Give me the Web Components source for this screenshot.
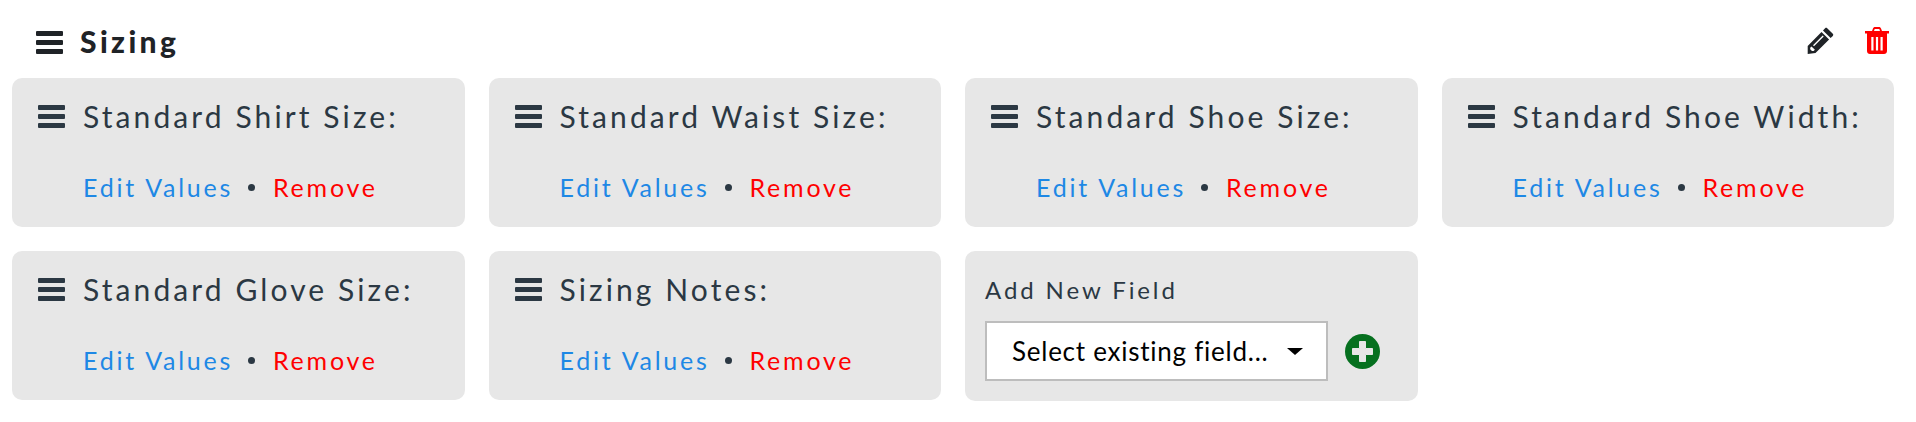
<!DOCTYPE html>
<html>
<head>
<meta charset="utf-8">
<title>Sizing</title>
<style>
  html, body { margin: 0; background: #fff; }
  body { font-family: "Lato", "Liberation Sans", sans-serif; font-variant-ligatures: none; }
</style>
</head>
<body>
<template id="bars-tpl">
  <style>
    :host { display: inline-flex; flex: none; }
    svg { display: block; width: 27px; height: 23px; fill: currentColor; }
  </style>
  <svg viewBox="0 0 27 23"><rect y="0" width="27" height="5" rx="1"/><rect y="9" width="27" height="5" rx="1"/><rect y="18" width="27" height="5" rx="1"/></svg>
</template>

<script>
  class SizingBars extends HTMLElement {
    constructor() {
      super();
      this.attachShadow({ mode: "open" });
      this.shadowRoot.appendChild(document.getElementById("bars-tpl").content.cloneNode(true));
    }
  }
  customElements.define("sizing-bars", SizingBars);

  class SizingHeader extends HTMLElement {
    constructor() {
      super();
      this.attachShadow({ mode: "open" });
      this.shadowRoot.innerHTML = `
        <style>
          :host { display: flex; align-items: center; height: 78px; box-sizing: border-box; padding: 6px 21px 0 36px; color: #1f2327; }
          h2 { margin: 0 0 2px 17px; font-size: 30px; line-height: 36px; font-weight: 900; letter-spacing: 3.4px; flex: 1; }
          .tools { display: flex; align-items: center; gap: 31px; padding: 0 6px 4px 0; }
          svg { display: block; }
        </style>
        <sizing-bars></sizing-bars>
        <h2><slot></slot></h2>
        <div class="tools">
          <svg width="27" height="27" viewBox="0 0 27 27" fill="#1f2327"><path d="M20.2 1.2 25.8 6.8C26.4 7.4 26.4 8.3 25.8 8.9L23.6 11 16 3.4 18.100 1.200C18.700 .6 19.600 .6 20.200 1.200ZM14.500 4.900 22.100 12.500 8.500 26 .7 27V19ZM4.500 19.500 3.200 20.800V22.300L5 24.100H6.600L7.900 22.800ZM15.700 8.500 6 18.200 7 19.200 16.700 9.500Z"/></svg>
          <svg width="24" height="27" viewBox="0 0 24 27" fill="#ff0000"><path fill-rule="evenodd" d="M7 4 8 1.500C8.400.5 9.100 0 10 0H14C14.900 0 15.600.5 16 1.500L17 4H24V6.500H22V24C22 25.700 20.700 27 19 27H5C3.300 27 2 25.700 2 24V6.500H0V4ZM9 4H15L14.300 2H9.700ZM6.300 10V23.500H8.500V10ZM10.900 10V23.500H13.100V10ZM15.500 10V23.500H17.700V10Z"/></svg>
        </div>
      `;
    }
  }
  customElements.define("sizing-header", SizingHeader);

  class FieldCard extends HTMLElement {
    constructor() {
      super();
      this.attachShadow({ mode: "open" });
      this.shadowRoot.innerHTML = `
        <style>
          :host { display: flex; flex-direction: column; box-sizing: border-box; height: 149px; padding: 22px 20px 0 26px; background: #e7e7e7; border-radius: 10px; color: #2b3843; }
          .title { display: flex; align-items: center; height: 32px; gap: 18px; font-size: 30px; letter-spacing: 3.1px; white-space: nowrap; }
          sizing-bars { color: #2b3843; }
          .links { display: flex; align-items: center; margin: 40px 0 0 45px; height: 30px; font-size: 25px; letter-spacing: 2.75px; white-space: nowrap; }
          a { color: #1e88e5; text-decoration: none; }
          a.rm { color: #ff0000; }
          .dot { width: 7px; height: 7px; border-radius: 50%; background: #2b3843; margin: 0 18px 0 15px; }
        </style>
        <div class="title"><sizing-bars></sizing-bars><span><slot></slot></span></div>
        <div class="links"><a href="#">Edit Values</a><span class="dot"></span><a class="rm" href="#">Remove</a></div>
      `;
    }
  }
  customElements.define("field-card", FieldCard);

  class AddFieldCard extends HTMLElement {
    constructor() {
      super();
      this.attachShadow({ mode: "open" });
      this.shadowRoot.innerHTML = `
        <style>
          :host { display: block; box-sizing: border-box; height: 150px; padding: 24px 20px 0 20px; background: #e7e7e7; border-radius: 10px; color: #2b3843; }
          label { display: block; font-size: 24px; line-height: 30px; letter-spacing: 2.9px; white-space: nowrap; }
          .row { display: flex; align-items: center; margin-top: 16px; }
          .select { display: flex; align-items: center; justify-content: space-between; box-sizing: border-box; width: 343px; height: 60px; padding: 0 23px 0 25px; background: #fff; border: 2px solid #bdbdbd; color: #000; font-size: 26px; letter-spacing: .75px; white-space: nowrap; }
          .caret { width: 0; height: 0; border: 8px solid transparent; border-top: 7px solid #000; border-bottom: 0; }
          svg { display: block; margin-left: 17px; }
        </style>
        <label><slot name="label"></slot></label>
        <div class="row">
          <div class="select"><span><slot></slot></span><span class="caret"></span></div>
          <svg width="35" height="35" viewBox="0 0 35 35"><circle cx="17.500" cy="17.500" r="17.500" fill="#06701f"/><path d="M14.500 7.500H20.500V14.500H27.500V20.500H20.500V27.500H14.500V20.500H7.500V14.500H14.500Z" fill="#e7e7e7" stroke="#e7e7e7" stroke-width="1" stroke-linejoin="round"/></svg>
        </div>
      `;
    }
  }
  customElements.define("add-field-card", AddFieldCard);

  class FieldGrid extends HTMLElement {
    constructor() {
      super();
      this.attachShadow({ mode: "open" });
      this.shadowRoot.innerHTML = `
        <style>
          :host { display: grid; grid-template-columns: repeat(4, 1fr); gap: 24px 24px; padding: 0 22px 0 12px; }
        </style>
        <slot></slot>
      `;
    }
  }
  customElements.define("field-grid", FieldGrid);
</script>

<sizing-header>Sizing</sizing-header>
<field-grid>
  <field-card>Standard Shirt Size:</field-card>
  <field-card>Standard Waist Size:</field-card>
  <field-card>Standard Shoe Size:</field-card>
  <field-card>Standard Shoe Width:</field-card>
  <field-card>Standard Glove Size:</field-card>
  <field-card>Sizing Notes:</field-card>
  <add-field-card><span slot="label">Add New Field</span>Select existing field...</add-field-card>
</field-grid>
</body>
</html>
